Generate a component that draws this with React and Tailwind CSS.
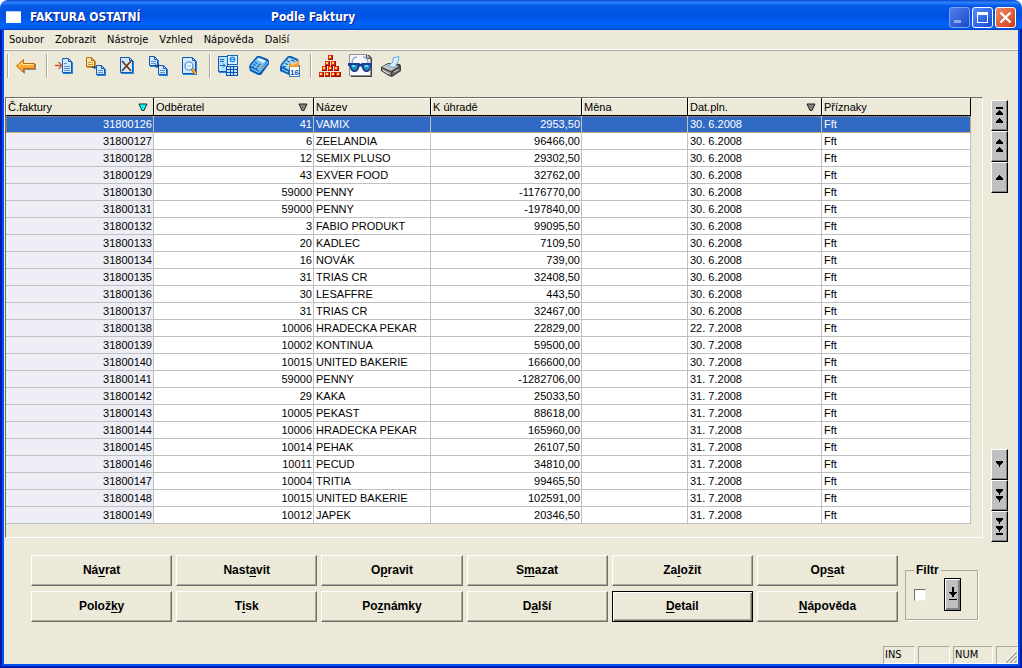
import React, { useState } from 'react';
import clsx from 'clsx';

const MENU = ['Soubor', 'Zobrazit', 'Nástroje', 'Vzhled', 'Nápověda', 'Další'];

const COLUMNS = [
  { label: 'Č.faktury', width: 'w-[148px]', sort: '#00ffff' },
  { label: 'Odběratel', width: 'w-[160px]', sort: '#808080' },
  { label: 'Název', width: 'w-[117px]' },
  { label: 'K úhradě', width: 'w-[151px]' },
  { label: 'Měna', width: 'w-[106px]' },
  { label: 'Dat.pln.', width: 'w-[134px]', sort: '#808080' },
  { label: 'Příznaky', width: '' },
];

const INVOICES = [
  [31800126, 41, 'VAMIX', '2953,50', '30. 6.2008'],
  [31800127, 6, 'ZEELANDIA', '96466,00', '30. 6.2008'],
  [31800128, 12, 'SEMIX PLUSO', '29302,50', '30. 6.2008'],
  [31800129, 43, 'EXVER FOOD', '32762,00', '30. 6.2008'],
  [31800130, 59000, 'PENNY', '-1176770,00', '30. 6.2008'],
  [31800131, 59000, 'PENNY', '-197840,00', '30. 6.2008'],
  [31800132, 3, 'FABIO PRODUKT', '99095,50', '30. 6.2008'],
  [31800133, 20, 'KADLEC', '7109,50', '30. 6.2008'],
  [31800134, 16, 'NOVÁK', '739,00', '30. 6.2008'],
  [31800135, 31, 'TRIAS CR', '32408,50', '30. 6.2008'],
  [31800136, 30, 'LESAFFRE', '443,50', '30. 6.2008'],
  [31800137, 31, 'TRIAS CR', '32467,00', '30. 6.2008'],
  [31800138, 10006, 'HRADECKA PEKAR', '22829,00', '22. 7.2008'],
  [31800139, 10002, 'KONTINUA', '59500,00', '30. 7.2008'],
  [31800140, 10015, 'UNITED BAKERIE', '166600,00', '30. 7.2008'],
  [31800141, 59000, 'PENNY', '-1282706,00', '31. 7.2008'],
  [31800142, 29, 'KAKA', '25033,50', '31. 7.2008'],
  [31800143, 10005, 'PEKAST', '88618,00', '31. 7.2008'],
  [31800144, 10006, 'HRADECKA PEKAR', '165960,00', '31. 7.2008'],
  [31800145, 10014, 'PEHAK', '26107,50', '31. 7.2008'],
  [31800146, 10011, 'PECUD', '34810,00', '31. 7.2008'],
  [31800147, 10004, 'TRITIA', '99465,50', '31. 7.2008'],
  [31800148, 10015, 'UNITED BAKERIE', '102591,00', '31. 7.2008'],
  [31800149, 10012, 'JAPEK', '20346,50', '31. 7.2008'],
];

// [before, hot key, after]
const ACTIONS = [
  ['Ná', 'v', 'rat'],
  ['Nast', 'a', 'vit'],
  ['O', 'p', 'ravit'],
  ['S', 'm', 'azat'],
  ['Za', 'l', 'ožit'],
  ['Op', 's', 'at'],
  ['Polož', 'k', 'y'],
  ['T', 'i', 'sk'],
  ['Po', 'z', 'námky'],
  ['D', 'a', 'lší'],
  ['', 'D', 'etail'],
  ['', 'N', 'ápověda'],
];

const Doc = ({ x, y, w = 9, h = 10, lines = true, stroke = '#1058b0', fill = '#cfe8ff', shade = '#1c88e8' }) => (
  <g>
    <path d={`M${x + 1} ${y + h}h${w - 1}V${y + 4}h1v${h - 3}h-${w}z`} fill={shade} />
    <path
      d={`M${x + 0.5} ${y + 0.5}h${w - 4}l3 3v${h - 4}h-${w - 1}z`}
      fill={fill}
      stroke={stroke}
    />
    <path d={`M${x + w - 3.5} ${y + 1}v2.5h3`} fill="none" stroke={stroke} />
    {lines && (
      <path d={`M${x + 2} ${y + h - 4.5}h${w - 4}M${x + 2} ${y + h - 2.5}h${w - 4}`} stroke={stroke} strokeOpacity=".6" />
    )}
  </g>
);

const PYRAMID = [
  [11, 1],
  [8, 7], [14, 7],
  [5, 12], [11, 12], [17, 12],
  [2, 18], [8, 18], [14, 18], [19, 18],
];

const ICONS = {
  back: (
    <>
      <path d="M4 13l7 7v-4h11v-6h-1v5H10z" fill="#8a8a94" />
      <path d="M2.500 12L9.500 5.500V9.500H20.500V14.500H9.500V18.500z" fill="#ffa82a" stroke="#b86810" />
      <path d="M5 11.500L8.500 8.500V10.500H19.500" fill="none" stroke="#ffe49a" />
    </>
  ),
  insert: (
    <>
      <Doc x={9} y={4} w={10} h={15} />
      <path d="M11 9.500h3M11 12.500h6" stroke="#1058b0" strokeOpacity=".6" />
      <path d="M2 11.500h7" stroke="#d84820" strokeWidth="1.400" />
      <path d="M5.500 8l3.500 3.500L5.500 15" fill="none" stroke="#b86848" strokeWidth="1.300" />
    </>
  ),
  copy: (
    <>
      <Doc x={2} y={3} stroke="#a86c10" fill="#ffe2a0" shade="#d89828" />
      <Doc x={12} y={11} />
      <path d="M8 13.500h3M10 12l2 1.500-2 1.500" fill="none" stroke="#0c4f88" />
    </>
  ),
  remove: (
    <>
      <Doc x={5} y={3} w={13} h={16} lines={false} />
      <path d="M7 7l9 10M16 7L7 17" stroke="#6e3c10" strokeWidth="1.800" />
    </>
  ),
  move: (
    <>
      <Doc x={3} y={2} />
      <Doc x={12} y={11} />
      <path d="M9 10.500l3 2.500M12.500 10v3h-3" fill="none" stroke="#083a6a" />
    </>
  ),
  find: (
    <>
      <Doc x={5} y={3} w={14} h={17} lines={false} />
      <circle cx="12" cy="12" r="4" fill="#e8f8ff" stroke="#4888c0" strokeWidth="1.200" />
      <path d="M10 12h4" stroke="#78b8e8" />
      <path d="M15 15l4 5" stroke="#906020" strokeWidth="3" />
      <path d="M15 15l4 5" stroke="#ffb840" strokeWidth="1.600" />
    </>
  ),
  compute: (
    <>
      <path d="M2.500 2.500h9v15h-9z" fill="#b8e0ff" stroke="#1058b0" />
      <path d="M3 18.500h9" stroke="#1c88e8" />
      <path d="M4 5.500h4M4 7.500h4M4 11.500h5M7 9.500l2 2-2 2" fill="none" stroke="#1868b8" />
      <rect x="11.500" y="1.500" width="10" height="9" fill="#e0f2ff" stroke="#1868b8" />
      <circle cx="16.500" cy="5.500" r="2.300" fill="none" stroke="#2890f0" strokeWidth="1.400" />
      <path d="M15 5.500h3" stroke="#2890f0" />
      <rect x="10" y="12" width="12" height="10" fill="#0c4fa8" />
      <path d="M11 13h3v2h-3zM15 13h2v2h-2zM18 13h3v2h-3zM11 16h3v2h-3zM15 16h2v2h-2zM18 16h3v2h-3zM11 19h3v2h-3zM15 19h2v2h-2zM18 19h3v2h-3z" fill="#b8e4ff" />
    </>
  ),
  calc: (
    <>
      <path d="M2 13l1-3 7-8h3l8 3 1 2v3l-8 11h-3l-8-4z" fill="#0c60b8" />
      <path d="M3.500 12L11 3.500 20 7l-7.500 10z" fill="#78c4f8" />
      <path d="M10 5.500l1.500-1.500 7 2.500-2 2.500z" fill="#e8f8ff" />
      <path d="M4 14.500l8 4L21 8" fill="none" stroke="#b8e8ff" />
      <path d="M8 8.500l2 .8M11.500 10l2 .8M6.500 10.500l2 .8M10 12l2 .8M5 12.500l2 .8M8.500 14l2 .8" stroke="#0c58a8" strokeWidth="1.300" />
      <path d="M13.500 12.500l2 .8" stroke="#e89040" strokeWidth="1.800" />
    </>
  ),
  calendar: (
    <>
      <path d="M2 13l1-3 7-8h3l7 3 1 2v3l-8 11h-2l-9-4z" fill="#0c60b8" />
      <path d="M3.500 12L11 3.500 19 6.500l-7 10z" fill="#a8dcff" />
      <path d="M4 15l6 3" stroke="#b8e8ff" />
      <path d="M9 7l3 1M7 9.500l3 1M5 12l3 1M13 6l4 1.500" stroke="#0c58a8" strokeWidth="1.300" />
      <rect x="11.500" y="11.500" width="10" height="11" fill="#fff" stroke="#3878b8" />
      <path d="M11 9l4 1 6-4v7H11z" fill="#f0a030" />
      <path d="M14 11l6-3" stroke="#ffe0a0" />
      <text x="16.500" y="21" textAnchor="middle" fontSize="8" fontWeight="700" fill="#0c4fa8" fontFamily="Liberation Sans, sans-serif">16</text>
    </>
  ),
  pyramid: (
    <g shapeRendering="crispEdges">
      {PYRAMID.map(([x, y]) => (
        <g key={`${x}-${y}`}>
          <rect x={x} y={y} width="5" height="5" fill="#981010" />
          <rect x={x} y={y} width="4" height="4" fill="#f42810" />
          <rect x={x + 1} y={y + 1} width="2" height="2" fill="#ffe850" />
        </g>
      ))}
    </g>
  ),
  glasses: (
    <>
      <path d="M3 1h18l3 3v19H3z" fill="#404040" />
      <path d="M1.500 .5h17l4 4v17h-21z" fill="#f8f8f8" stroke="#909090" />
      <path d="M18.500 .5v4h4" fill="#c0c0c0" stroke="#404040" />
      <path d="M4 10c0-5 2-7 5-7M20 10c0-5-2-7-5-7" fill="none" stroke="#98a8d0" strokeWidth="1.500" />
      <path d="M0 9h11l1.500 1L14 9h10v3h-1c0 4-2 6-4.500 6S14 16 13.500 12.500h-2C11 16 9 18 6.500 18S2 16 1.500 12H0z" fill="#1c3c90" />
      <path d="M3 11h6.500c0 3-1 5-3 5s-3.500-2-3.500-5zM15.500 11H22c0 3-1.500 5-3.500 5s-3-2-3-5z" fill="#2090c8" />
      <path d="M4 11h3v2H4zM17 11h3v2h-3z" fill="#60e0f0" />
    </>
  ),
  print: (
    <>
      <path d="M2 13l7-4 12 1 1 2v5l-9 6-3-1-8-5z" fill="#404040" />
      <path d="M3 13l6-3 11 2-8 5z" fill="#c8c8c8" />
      <path d="M3 14.500l9 4v3l-9-5z" fill="#989898" />
      <path d="M13 18.500l8-5v3l-8 5z" fill="#686868" />
      <path d="M9 12l5-4V4l6-1.500-1 5-3.500 6z" fill="#d8f0ff" stroke="#68a8d8" />
      <path d="M4 16.500l6 3.500" stroke="#f0f0f0" />
      <path d="M15 18l4-2.500" stroke="#e0e0e0" />
    </>
  ),
};

const TOOL_GROUPS = [
  [['back', 'Zpět']],
  [['insert', 'Vložit'], ['copy', 'Kopie'], ['remove', 'Zrušit'], ['move', 'Přesun'], ['find', 'Hledat']],
  [['compute', 'Výpočet'], ['calc', 'Kalkulačka'], ['calendar', 'Kalendář']],
  [['pyramid', 'Struktura'], ['glasses', 'Náhled'], ['print', 'Tisk']],
];

// arrow glyphs of the record navigator
const NAV_TOP = [
  ['První', 'M5 7h7v2H5zM8 10h1v1h1v1h1v1h1v2H5v-2h1v-1h1v-1h1zM8 18h1v1h1v1h1v1h1v2H5v-2h1v-1h1v-1h1z'],
  ['Předchozí strana', 'M8 8h1v1h1v1h1v1h1v2H5v-2h1v-1h1V9h1zM8 16h1v1h1v1h1v1h1v2H5v-2h1v-1h1v-1h1z'],
  ['Předchozí', 'M8 13h1v1h1v1h1v1h1v2H5v-2h1v-1h1v-1h1z'],
];
const NAV_BOTTOM = [
  ['Další', 'M5 12h7v2h-1v1h-1v1H9v2H8v-2H7v-1H6v-1H5z'],
  ['Další strana', 'M5 9h7v2h-1v1h-1v1H9v2H8v-2H7v-1H6v-1H5zM5 16h7v2h-1v1h-1v1H9v2H8v-2H7v-1H6v-1H5z'],
  ['Poslední', 'M5 7h7v2h-1v1h-1v1H9v2H8v-2H7v-1H6V9H5zM5 15h7v2h-1v1h-1v1H9v2H8v-2H7v-1H6v-1H5zM5 22h7v2H5z'],
];

const NavButton = ({ label, d }) => (
  <button
    type="button"
    aria-label={label}
    className="block w-[17px] h-[31px] bg-[#c0c0c0] border-t border-l border-t-white border-l-white border-b border-r border-b-black border-r-black shadow-[inset_-1px_-1px_0_#808080]"
  >
    <svg viewBox="1 1 15 29" className="block w-full h-full" shapeRendering="crispEdges">
      <path d={d} fill="#000" />
    </svg>
  </button>
);

const TitleBar = () => (
  <header className="h-[30px] shrink-0 flex items-center pt-1 pl-1.5 pr-1.5 rounded-t-lg bg-[linear-gradient(#0a48c8_0%,#2c80ff_8%,#0458e4_20%,#0054e3_55%,#0062fa_78%,#0060f4_92%,#0040c0_100%)] text-white font-bold text-[12px] leading-4 font-['DejaVu_Sans_Condensed','DejaVu_Sans',sans-serif] [text-shadow:1px_1px_0_#0a1883]">
    <svg viewBox="0 0 15 12" className="w-[15px] h-3 mr-[9px]" aria-hidden="true">
      <rect width="15" height="12" fill="#fff" />
      <rect width="15" height="1" fill="#a8ccf8" />
    </svg>
    <h1 className="w-[241px] whitespace-nowrap">FAKTURA OSTATNÍ</h1>
    <span className="flex-1 whitespace-nowrap">Podle Faktury</span>
    <div className="flex gap-0.5">
      <button type="button" aria-label="Minimalizovat" className="w-[21px] h-[21px] rounded-[3px] border border-[#7ea0f0] bg-linear-to-br from-[#4f7fec] to-[#1c48c8]">
        <svg viewBox="0 0 19 19" className="block">
          <rect x="4" y="12" width="7" height="3" fill="#90a8ee" />
        </svg>
      </button>
      <button type="button" aria-label="Maximalizovat" className="w-[21px] h-[21px] rounded-[3px] border border-white bg-linear-to-br from-[#5a8cf8] to-[#1448d8]">
        <svg viewBox="0 0 19 19" className="block">
          <path d="M4 4h11v11H4zM5 7v7h9V7z" fill="#fff" fillRule="evenodd" />
        </svg>
      </button>
      <button type="button" aria-label="Zavřít" className="w-[21px] h-[21px] rounded-[3px] border border-white bg-linear-to-br from-[#f08868] to-[#d03808]">
        <svg viewBox="0 0 19 19" className="block">
          <path d="M4.500 4.500l10 10M14.500 4.500l-10 10" stroke="#fff" strokeWidth="2.400" />
        </svg>
      </button>
    </div>
  </header>
);

const Toolbar = () => (
  <div className="flex pl-[3px] pt-[3px] h-[46px]">
    {TOOL_GROUPS.map((group, idx) => (
      <div key={idx} className="flex mr-[5px]">
        <div className="w-0.5 h-6 mr-px border-l border-l-[#aca899] border-r border-r-white" />
        {group.map(([icon, label]) => (
          <button key={icon} type="button" aria-label={label} className="w-[31px] h-6 pl-1">
            <svg viewBox="0 0 24 24" className="block w-6 h-6">
              {ICONS[icon]}
            </svg>
          </button>
        ))}
      </div>
    ))}
  </div>
);

const InvoiceTable = () => {
  const [selected, setSelected] = useState(31800126);

  return (
    <table className="w-full table-fixed border-separate border-spacing-0 text-[11px] leading-4 whitespace-nowrap">
      <thead>
        <tr>
          {COLUMNS.map((col) => (
            <th
              key={col.label}
              className={clsx(
                'h-[18px] p-0 font-normal text-left border-b border-r border-black',
                col.width
              )}
            >
              <div className="flex items-center justify-between h-[17px] pl-px pr-[5px] border-t border-l border-white">
                {col.label}
                {col.sort && (
                  <svg viewBox="0 0 10 9" className="w-2.5 h-[9px]" aria-hidden="true">
                    <path d="M1 1h8L6 7.500H4z" fill={col.sort} stroke="#202020" />
                  </svg>
                )}
              </div>
            </th>
          ))}
        </tr>
      </thead>
      <tbody>
        {INVOICES.map(([id, customer, name, amount, due]) => {
          const active = id === selected;
          const cell = 'h-[17px] p-0 border-b border-r border-[#c0c0c0]';
          return (
            <tr
              key={id}
              onClick={() => setSelected(id)}
              className={clsx(
                active
                  ? 'bg-[#316ac5] text-white outline-1 outline-dotted outline-[#ce953a] -outline-offset-1'
                  : 'bg-white'
              )}
            >
              <td className={clsx(cell, 'text-right pr-px', !active && 'bg-[#eeeef6]')}>{id}</td>
              <td className={clsx(cell, 'text-right pr-px')}>{customer}</td>
              <td className={clsx(cell, 'pl-0.5')}>{name}</td>
              <td className={clsx(cell, 'text-right pr-px')}>{amount}</td>
              <td className={cell} />
              <td className={clsx(cell, 'pl-0.5')}>{due}</td>
              <td className={clsx(cell, 'pl-0.5')}>Fft</td>
            </tr>
          );
        })}
      </tbody>
    </table>
  );
};

const Actions = () => (
  <div className="flex-1 grid grid-cols-6 gap-x-1 gap-y-[5px]">
    {ACTIONS.map(([before, key, after]) => (
      <button
        key={before + key + after}
        type="button"
        className={clsx(
          'h-[31px] pb-0.5 text-[12px] leading-4 font-bold',
          key === 'D'
            ? 'border border-black shadow-[inset_1px_1px_0_#fff,inset_-1px_-1px_0_#716f64,inset_-2px_-2px_0_#aca899]'
            : 'border border-t-white border-l-white border-b-[#716f64] border-r-[#716f64] shadow-[inset_-1px_-1px_0_#aca899]'
        )}
      >
        {before}
        <u className="underline-offset-2">{key}</u>
        {after}
      </button>
    ))}
  </div>
);

const Filter = () => (
  <fieldset className="w-[73px] h-[56px] mt-[9px] px-2 border border-[#aca899] shadow-[1px_1px_0_#fff]">
    <legend className="px-0.5 bg-[#ece9d8] text-[12px] leading-3 font-bold">Filtr</legend>
    <div className="flex items-center justify-between pt-0.5 pr-2">
      <input
        type="checkbox"
        aria-label="Filtr"
        className="appearance-none w-3 h-3 bg-white border border-t-[#716f64] border-l-[#716f64] border-b-[#f1efe2] border-r-[#f1efe2]"
      />
      <button
        type="button"
        aria-label="Nastavit filtr"
        className="w-[17px] h-[33px] border border-black bg-[#c0c0c0] shadow-[inset_1px_1px_0_#fff,inset_-2px_-2px_0_#808080]"
      >
        <svg viewBox="0 0 15 31" className="block w-full h-full" shapeRendering="crispEdges">
          <path d="M7 8h2v5h3v1h-1v1h-1v1H9v2H7v-2H6v-1H5v-1H4v-1h3zM4 20h8v1H4z" fill="#000" />
        </svg>
      </button>
    </div>
  </fieldset>
);

const StatusBar = () => {
  const cell = 'h-[18px] border border-t-[#aca899] border-l-[#aca899] border-b-white border-r-white';
  return (
    <footer className="mt-auto flex justify-end gap-[3px] text-[11px] leading-4 font-['DejaVu_Sans_Condensed','DejaVu_Sans',sans-serif]">
      <div className={clsx(cell, 'w-8 pl-px')}>INS</div>
      <div className={clsx(cell, 'w-8')} />
      <div className={clsx(cell, 'w-10 pl-px')}>NUM</div>
      <div className={clsx(cell, 'w-[22px] flex justify-end items-end')}>
        <svg viewBox="0 0 12 12" className="w-3 h-3" aria-hidden="true">
          <path d="M1 12L12 1M5 12l7-7M9 12l3-3" stroke="#aca899" strokeWidth="1.500" />
          <path d="M0 11L11 0M4 11l7-7M8 11l3-3" stroke="#fff" strokeWidth="1" />
        </svg>
      </div>
    </footer>
  );
};

const App = () => {
  return (
    <div className="min-h-screen flex flex-col text-black font-['Liberation_Sans',Arial,sans-serif]">
      <TitleBar />
      <div className="flex-1 flex flex-col border-2 border-t-0 border-[#0019b0]">
        <div className="flex-1 flex flex-col border-2 border-t-0 border-[#0050ee] bg-[#ece9d8]">
          <nav className="h-[21px] shrink-0 flex gap-[11px] pl-[5px] pt-0.5 border-b border-b-[#aca899] shadow-[inset_0_-1px_0_#fff] text-[11px] leading-4 font-['DejaVu_Sans_Condensed','DejaVu_Sans',sans-serif]">
            {MENU.map((item) => (
              <button key={item} type="button" className="h-4">
                {item}
              </button>
            ))}
          </nav>
          <Toolbar />
          <main>
            <div className="flex pl-px pr-2.5">
              <div className="flex-1 min-w-0 mb-1 pr-[11px] pb-[13px] border border-t-[#716f64] border-l-[#716f64] border-b-white border-r-white">
                <InvoiceTable />
              </div>
              <div className="ml-2 pt-[3px] flex flex-col justify-between">
                <div>
                  {NAV_TOP.map(([label, d]) => (
                    <NavButton key={label} label={label} d={d} />
                  ))}
                </div>
                <div>
                  {NAV_BOTTOM.map(([label, d]) => (
                    <NavButton key={label} label={label} d={d} />
                  ))}
                </div>
              </div>
            </div>
            <div className="flex items-start gap-[7px] pt-[13px] pl-[27px] pr-10">
              <Actions />
              <Filter />
            </div>
          </main>
          <StatusBar />
        </div>
      </div>
    </div>
  );
};

export default App;
